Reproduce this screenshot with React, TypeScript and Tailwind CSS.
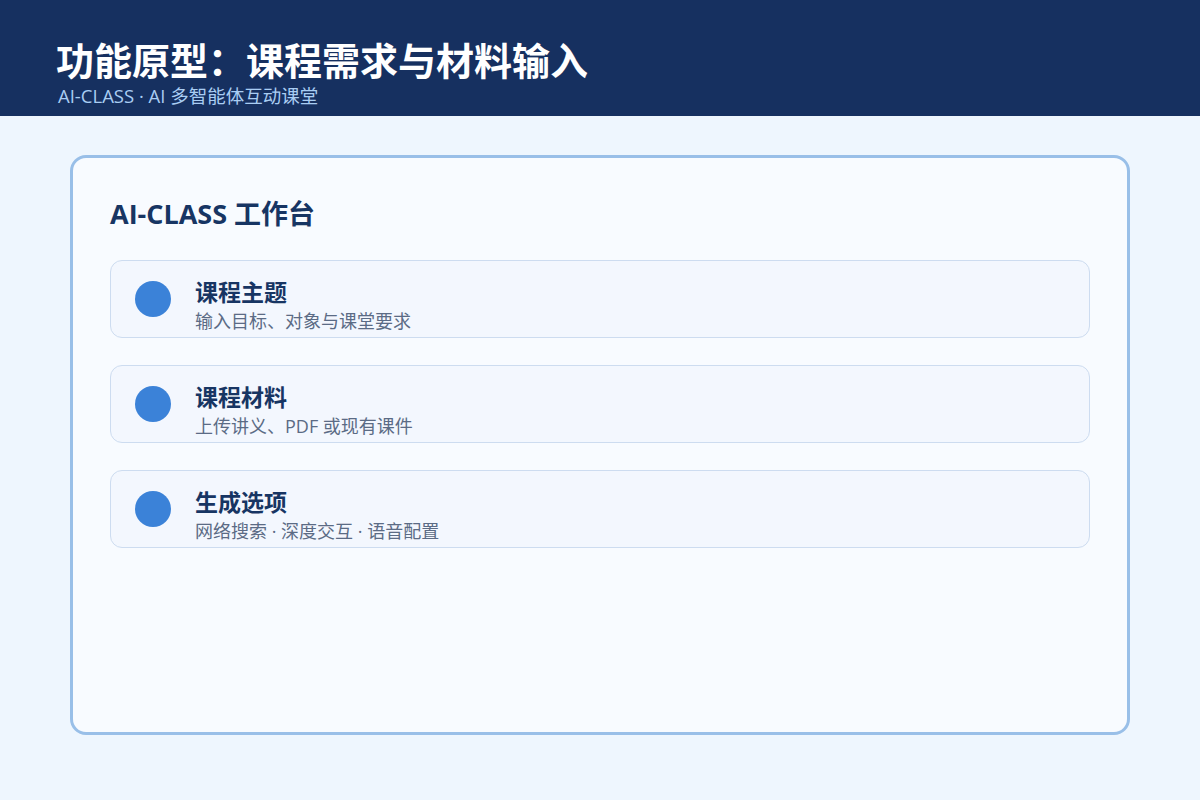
const font = { fontFamily: '"Open Sans", "Noto Sans CJK SC", sans-serif' };

const steps = [
  { title: "课程主题", desc: "输入目标、对象与课堂要求" },
  { title: "课程材料", desc: "上传讲义、PDF 或现有课件" },
  { title: "生成选项", desc: "网络搜索 · 深度交互 · 语音配置" },
];

function StepRow({ title, desc }: { title: string; desc: string }) {
  return (
    <div className="flex h-[78px] items-center gap-6 rounded-xl border border-[#cddcf0] bg-[#f3f7fe] pl-6">
      <div className="h-9 w-9 shrink-0 rounded-full bg-[#3b82d8]" />
      <div className="flex flex-col pt-[13px]">
        <div className="text-[23px] leading-[28px] font-bold text-[#173563]">{title}</div>
        <div className="mt-[3px] text-[18px] leading-[24px] text-[#5b6b85]">{desc}</div>
      </div>
    </div>
  );
}

export default function App() {
  return (
    <div className="flex h-[800px] w-[1200px] flex-col bg-[#eef6fe]" style={font}>
      <header className="flex h-[116px] flex-col bg-[#163060] pl-14 pt-[38px]">
        <h1 className="text-[38px] leading-[44px] font-bold text-white">功能原型：课程需求与材料输入</h1>
        <p className="ml-[2px] mt-[1px] text-[18.5px] leading-[26px] text-[#a9cdf3]">AI-CLASS · AI 多智能体互动课堂</p>
      </header>
      <main className="px-[70px] pt-[39px]">
        <div className="h-[580px] rounded-2xl border-[3px] border-[#99bfe8] bg-[#f8fbff] px-[37px] pt-[38px]">
          <h2 className="text-[27px] leading-[36px] font-bold text-[#173563]">AI-CLASS 工作台</h2>
          <div className="mt-[28px] flex flex-col gap-[27px]">
            {steps.map((s) => (
              <StepRow key={s.title} {...s} />
            ))}
          </div>
        </div>
      </main>
    </div>
  );
}
